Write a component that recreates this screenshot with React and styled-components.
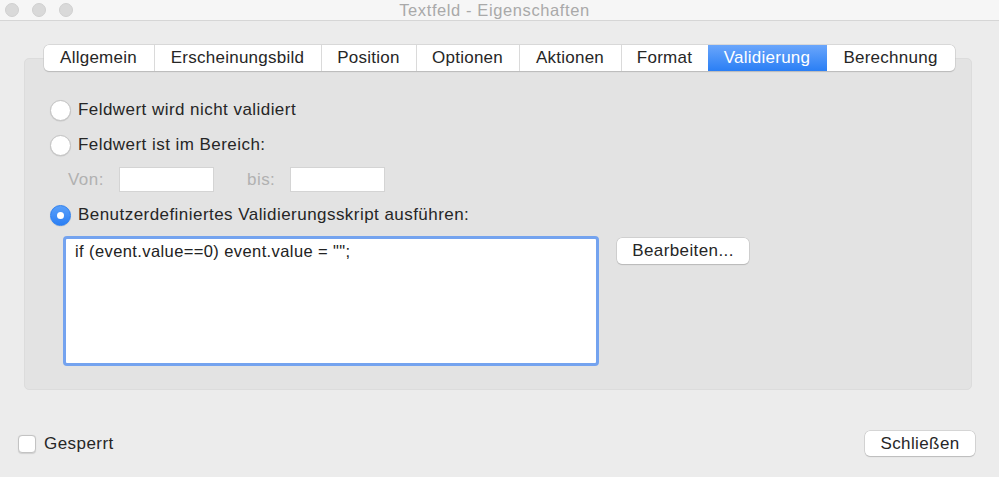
import React from "react";
import styled, { createGlobalStyle } from "styled-components";

const Global = createGlobalStyle`
  html, body { margin: 0; padding: 0; background: #ececec; }
  body {
    font-family: "Liberation Sans", Arial, sans-serif;
    color: #262626;
  }
  * { box-sizing: border-box; }
`;

const Window = styled.div`
  width: 999px;
  height: 477px;
  background: #ececec;
  display: flex;
  flex-direction: column;
  overflow: hidden;
`;

const TitleBar = styled.div`
  height: 21px;
  flex: none;
  background: #f6f6f6;
  border-bottom: 1px solid #d6d6d6;
  display: grid;
  grid-template-columns: 1fr auto 1fr;
  align-items: center;
`;

const Lights = styled.div`
  display: flex;
  gap: 13px;
  padding-left: 5px;
`;

const Light = styled.span`
  width: 14px;
  height: 14px;
  border-radius: 50%;
  background: #d9d9d9;
  border: 1px solid #d0d0d0;
`;

const Title = styled.div`
  font-size: 16.5px;
  letter-spacing: 0.6px;
  color: #a9a9a9;
  margin-left: -10px;
`;

const Body = styled.div`
  flex: 1;
  display: flex;
  flex-direction: column;
  padding-top: 24px;
`;

const TabBar = styled.div`
  align-self: center;
  display: flex;
  height: 26px;
  margin-bottom: -13px;
  margin-left: -1px;
  position: relative;
  z-index: 1;
  background: #fff;
  border-radius: 5px;
  box-shadow: 0 0 0 0.5px #c4c4c4, 0 1px 1px rgba(0, 0, 0, 0.22);
`;

const Tab = styled.div`
  width: ${(p) => p.w}px;
  display: flex;
  align-items: center;
  justify-content: center;
  font-size: 17px;
  letter-spacing: 0.25px;
  color: ${(p) => (p.active ? "#fff" : "#262626")};
  background: ${(p) =>
    p.active ? "linear-gradient(#6aa6fb, #2a7ff5)" : "transparent"};
  border-left: ${(p) =>
    p.first || p.active || p.afterActive ? "none" : "1px solid #dadada"};
  &:first-child { border-radius: 5px 0 0 5px; }
  &:last-child { border-radius: 0 5px 5px 0; }
`;

const Panel = styled.div`
  height: 332px;
  margin: 0 27px 0 24px;
  background: #e3e3e3;
  border: 1px solid #dcdcdc;
  border-radius: 5px;
  padding: 39px 24px 0 25px;
  display: flex;
  flex-direction: column;
`;

const Row = styled.div`
  display: flex;
  align-items: center;
  height: ${(p) => p.h || 24}px;
  margin-top: ${(p) => p.mt || 0}px;
  padding-left: ${(p) => p.indent || 0}px;
`;

const Radio = styled.span`
  width: 21px;
  height: 21px;
  flex: none;
  border-radius: 50%;
  background: ${(p) =>
    p.checked ? "linear-gradient(#5aa0fa, #2b7ff4)" : "#fff"};
  border: 1px solid ${(p) => (p.checked ? "#2a7ef0" : "#c3c3c3")};
  box-shadow: 0 0.5px 1px rgba(0, 0, 0, 0.12);
  display: flex;
  align-items: center;
  justify-content: center;
  &::after {
    content: "";
    display: ${(p) => (p.checked ? "block" : "none")};
    width: 7px;
    height: 7px;
    border-radius: 50%;
    background: #fff;
  }
`;

const Label = styled.span`
  font-size: 17px;
  letter-spacing: 0.45px;
  color: ${(p) => (p.dim ? "#b1b1b1" : "#262626")};
  margin-left: ${(p) => p.ml || 0}px;
  width: ${(p) => (p.w ? p.w + "px" : "auto")};
`;

const Field = styled.span`
  width: 95px;
  height: 25px;
  background: #fff;
  border: 1px solid #d4d4d4;
  flex: none;
`;

const ScriptRow = styled.div`
  display: flex;
  align-items: flex-start;
  margin-top: 9px;
  padding-left: 13px;
  gap: 18px;
`;

const ScriptBox = styled.div`
  width: 536px;
  height: 130px;
  background: #fff;
  border: 3px solid #74a3ef;
  border-radius: 4px;
  padding: 3px 9px;
  font-size: 16.5px;
  letter-spacing: 0.4px;
  color: #222;
`;

const Button = styled.div`
  width: ${(p) => p.w}px;
  height: ${(p) => p.h || 26}px;
  margin-top: ${(p) => p.mt || 0}px;
  background: #fff;
  border-radius: 5px;
  box-shadow: 0 0 0 0.5px #bdbdbd, 0 1px 1px rgba(0, 0, 0, 0.2);
  display: flex;
  align-items: center;
  justify-content: center;
  font-size: 17px;
  letter-spacing: 0.4px;
  color: #262626;
  flex: none;
`;

const Footer = styled.div`
  flex: 1;
  display: flex;
  align-items: center;
  justify-content: space-between;
  padding: 20px 24px 0 18px;
`;

const CheckRow = styled.div`
  display: flex;
  align-items: center;
  gap: 8px;
`;

const Checkbox = styled.span`
  width: 18px;
  height: 18px;
  background: #fff;
  border: 1px solid #c3c3c3;
  border-radius: 4px;
  box-shadow: 0 0.5px 1px rgba(0, 0, 0, 0.12);
`;

const tabs = [
  ["Allgemein", 110],
  ["Erscheinungsbild", 167],
  ["Position", 95],
  ["Optionen", 103],
  ["Aktionen", 102],
  ["Format", 87],
  ["Validierung", 119],
  ["Berechnung", 128],
];

export default function App() {
  const activeIdx = 6;
  return (
    <>
      <Global />
      <Window>
        <TitleBar>
          <Lights>
            <Light />
            <Light />
            <Light />
          </Lights>
          <Title>Textfeld - Eigenschaften</Title>
          <div />
        </TitleBar>
        <Body>
          <TabBar>
            {tabs.map(([t, w], i) => (
              <Tab
                key={t}
                w={w}
                first={i === 0}
                active={i === activeIdx}
                afterActive={i === activeIdx + 1}
              >
                {t}
              </Tab>
            ))}
          </TabBar>
          <Panel>
            <Row>
              <Radio />
              <Label ml={7}>Feldwert wird nicht validiert</Label>
            </Row>
            <Row mt={11}>
              <Radio />
              <Label ml={7}>Feldwert ist im Bereich:</Label>
            </Row>
            <Row h={25} mt={10} indent={18}>
              <Label dim w={51}>Von:</Label>
              <Field />
              <Label dim ml={33} w={43}>bis:</Label>
              <Field />
            </Row>
            <Row mt={11}>
              <Radio checked />
              <Label ml={7}>Benutzerdefiniertes Validierungsskript ausführen:</Label>
            </Row>
            <ScriptRow>
              <ScriptBox>if (event.value==0) event.value = "";</ScriptBox>
              <Button w={132} mt={2}>Bearbeiten...</Button>
            </ScriptRow>
          </Panel>
          <Footer>
            <CheckRow>
              <Checkbox />
              <Label>Gesperrt</Label>
            </CheckRow>
            <Button w={110} h={25}>Schließen</Button>
          </Footer>
        </Body>
      </Window>
    </>
  );
}
